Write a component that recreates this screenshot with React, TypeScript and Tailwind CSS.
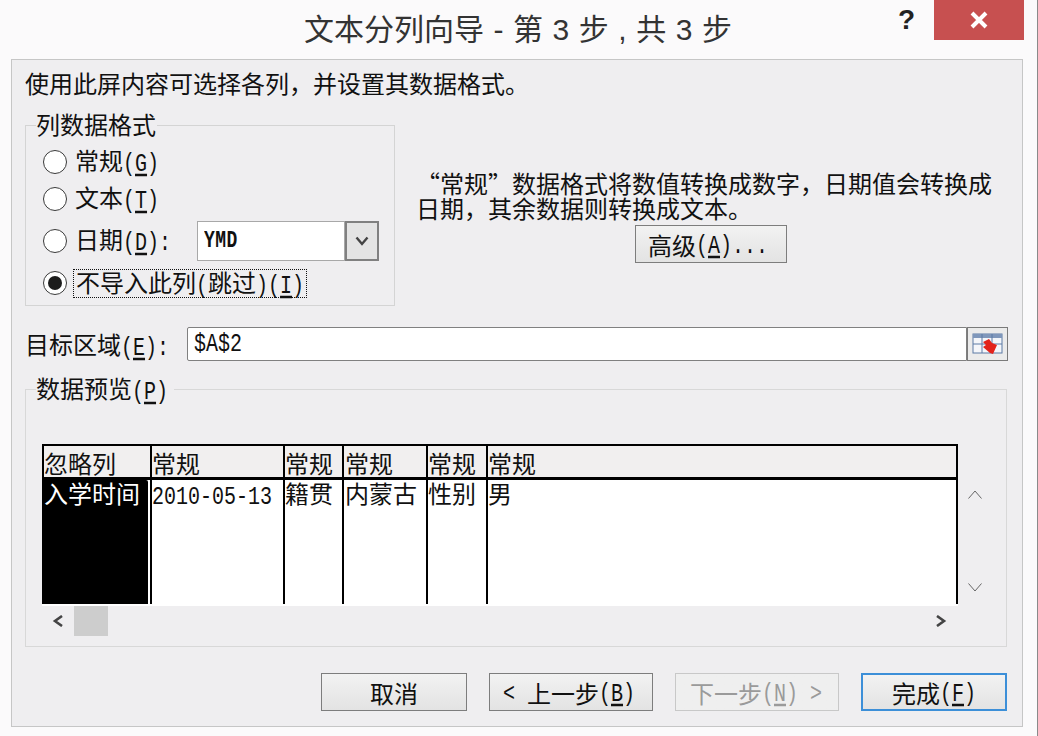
import React from "react";

const M = ({ children, className = "" }: { children: React.ReactNode; className?: string }) => (
  <span className={"inline-block scale-y-[1.25] whitespace-pre font-['Liberation_Mono',monospace] text-[20px] leading-[24px] " + className}>{children}</span>
);

const Acc = ({ k }: { k: string }) => (
  <M>
    (<span className="underline underline-offset-2">{k}</span>)
  </M>
);

const Radio = ({ on = false }: { on?: boolean }) => (
  <span className="w-[24px] h-[24px] rounded-full border-[1.5px] border-[#3a3a3a] bg-white flex items-center justify-center shrink-0">
    {on && <span className="w-[14px] h-[14px] rounded-full bg-[#1c1c1c]" />}
  </span>
);

const btn =
  "h-[38px] pt-[6px] flex items-center justify-center bg-gradient-to-b text-[24px] leading-[30px] ";
const normal = "border border-[#7d7d7d] from-[#f2f2f2] to-[#e3e3e3] text-[#111] ";

const columns = [
  { w: "w-[108px]", head: "忽略列", body: "入学时间", pad: "pl-0", black: true },
  { w: "w-[133px]", head: "常规", body: "2010-05-13", pad: "pl-0", mono: true },
  { w: "w-[59px]", head: "常规", body: "籍贯", pad: "pl-0" },
  { w: "w-[84px]", head: "常规", body: "内蒙古", pad: "pl-[1px]" },
  { w: "w-[60px]", head: "常规", body: "性别", pad: "pl-0" },
  { w: "w-[472px]", head: "常规", body: "男", pad: "pl-0", last: true },
];

export default function App() {
  return (
    <div className="w-[1038px] h-[736px] overflow-hidden bg-[#fbfafb] text-[#111] font-['Liberation_Sans','Noto_Sans_CJK_SC',sans-serif] flex flex-col border-r border-r-[#8a8a8a]">
      {/* Title bar */}
      <div className="h-[59px] flex items-start shrink-0">
        <div className="ml-[304px] mt-[11px] text-[30px] leading-[38px] text-[#333] whitespace-pre [word-spacing:1.2px]">
          文本分列向导 - 第 3 步 , 共 3 步
        </div>
        <div className="ml-auto flex items-start mr-[13px]">
          <span className="mr-[19px] mt-[4px] text-[28px] leading-[32px] font-bold text-[#222]">?</span>
          <div className="w-[90px] h-[40px] bg-[#c75050] flex items-center justify-center">
            <svg width="20" height="20" viewBox="0 0 20 20">
              <path d="M3 3 L17 17 M17 3 L3 17" stroke="#fff" strokeWidth="4" fill="none" />
            </svg>
          </div>
        </div>
      </div>

      {/* Main panel */}
      <div className="ml-[11px] w-[1012px] h-[668px] shrink-0 border border-[#c6c6c6] bg-[#efeef0] pl-[13px] pt-[13px] flex flex-col">
        <div className="text-[24px] leading-[24px] h-[24px] whitespace-nowrap">
          使用此屏内容可选择各列，并设置其数据格式。
        </div>

        {/* Format row */}
        <div className="flex mt-[28px] h-[181px]">
          <div className="relative w-[370px] h-[181px] border border-[#d4d4d4] pl-[17px] pt-[18px]">
            <span className="absolute -top-[13px] left-[10px] text-[24px] leading-[26px] bg-[#efeef0] pr-[1px] whitespace-nowrap">
              列数据格式
            </span>
            <div className="h-[36px] flex items-center gap-[8px]">
              <Radio />
              <span className="text-[24px] leading-[30px] whitespace-nowrap">
                常规<Acc k="G" />
              </span>
            </div>
            <div className="h-[36px] mt-[1px] flex items-center gap-[8px]">
              <Radio />
              <span className="text-[24px] leading-[30px] whitespace-nowrap">
                文本<Acc k="T" />
              </span>
            </div>
            <div className="h-[40px] mt-[4px] flex items-center">
              <Radio />
              <span className="ml-[8px] w-[122px] text-[24px] leading-[30px] whitespace-nowrap">
                日期<Acc k="D" />
                <M>:</M>
              </span>
              <div className="w-[182px] h-[40px] flex">
                <div className="w-[148px] h-[40px] bg-white border border-[#a8a8a8] pl-[6px] flex items-center">
                  <span className="inline-block scale-y-[1.3] font-['Liberation_Mono',monospace] font-bold text-[18px] tracking-[0.5px] text-[#111]">
                    YMD
                  </span>
                </div>
                <div className="w-[34px] h-[40px] border-2 border-[#808080] bg-[#e4e4e4] flex items-center justify-center">
                  <svg width="14" height="10" viewBox="0 0 14 10">
                    <path d="M1.5 1.5 L7 8 L12.5 1.5" stroke="#444" strokeWidth="2.4" fill="none" />
                  </svg>
                </div>
              </div>
            </div>
            <div className="h-[36px] mt-[4px] flex items-center">
              <Radio on />
              <span className="ml-[6px] w-[234px] h-[29px] border border-dotted border-[#111] pl-[2px] text-[24px] leading-[27px] whitespace-nowrap">
                不导入此列<M>(</M>跳过<M>)</M><Acc k="I" />
              </span>
            </div>
          </div>

          <div className="ml-[21px] pt-[45px]">
            <div className="w-[590px] text-[24px] leading-[25px] whitespace-nowrap font-['Noto_Sans_CJK_SC',sans-serif]">
              “常规”数据格式将数值转换成数字，日期值会转换成
              <br />
              日期，其余数据则转换成文本。
            </div>
            <div className={btn + normal + " w-[152px] ml-[219px] mt-[5px] pr-[6px] whitespace-nowrap"}>
              高级<Acc k="A" />
              <M>...</M>
            </div>
          </div>
        </div>

        {/* Destination row */}
        <div className="flex items-center mt-[21px] h-[34px]">
          <span className="w-[162px] pt-[3px] text-[24px] leading-[30px] whitespace-nowrap">
            目标区域<Acc k="E" />
            <M>:</M>
          </span>
          <div className="w-[780px] h-[34px] bg-white border border-[#808080] rounded-l-[2px] pl-[6px] pt-[2px] flex items-center">
            <M className="text-[#111]">$A$2</M>
          </div>
          <div className="w-[41px] h-[34px] border border-[#7a7a7a] bg-[#ebebeb] flex items-center justify-center">
            <svg width="31" height="24" viewBox="0 0 31 24">
              <rect x="1" y="2" width="29" height="19" fill="#f4f6fa" stroke="#5d7aa5" strokeWidth="1" />
              <rect x="1" y="2" width="29" height="4" fill="#7f97bb" />
              <path d="M1 12 H30 M10 2 V21 M20 2 V21" stroke="#5d7aa5" strokeWidth="1" fill="none" />
              <path d="M11 10 L17 7 L20 11 L25 13 L21 22 L18 21 L11 15 L14 13 Z" fill="#e3231b" />
            </svg>
          </div>
        </div>

        {/* Preview group */}
        <div className="relative mt-[28px] w-[982px] h-[258px] border border-[#d8d8d8] pl-[16px] pt-[54px]">
          <span className="absolute -top-[15px] left-[10px] text-[24px] leading-[30px] bg-[#efeef0] pr-[6px] whitespace-nowrap">
            数据预览<Acc k="P" />
          </span>
          <div className="flex">
            <div className="flex w-[916px] h-[160px] border-t-2 border-t-black">
              {columns.map((c, i) => (
                <div
                  key={i}
                  className={
                    c.w +
                    " flex flex-col border-l-2 border-l-black " +
                    (c.last ? "border-r-2 border-r-black" : "")
                  }
                >
                  <div
                    className={
                      "h-[34px] border-b-[3px] border-b-black bg-[#f1efef] overflow-hidden text-[24px] leading-[37px] whitespace-nowrap " +
                      c.pad
                    }
                  >
                    {c.head}
                  </div>
                  <div className="h-[124px] bg-white">
                    <div
                      className={
                        "h-full text-[24px] leading-[30px] whitespace-nowrap overflow-hidden " +
                        c.pad +
                        (c.black ? " bg-black text-white w-[104px] rounded-tr-[2px]" : "")
                      }
                    >
                      {c.mono ? <M>{c.body}</M> : c.body}
                    </div>
                  </div>
                </div>
              ))}
            </div>
            <div className="pl-[10px] pt-[46px] flex flex-col">
              <svg width="14" height="9" viewBox="0 0 14 9">
                <path d="M0.5 8.5 L7 1 L13.5 8.5" stroke="#666" strokeWidth="1" fill="none" />
              </svg>
              <svg className="mt-[84px]" width="14" height="9" viewBox="0 0 14 9">
                <path d="M0.5 0.5 L7 8 L13.5 0.5" stroke="#666" strokeWidth="1" fill="none" />
              </svg>
            </div>
          </div>
          <div className="w-[916px] h-[2px] bg-white" />
          <div className="w-[916px] h-[30px] flex items-center">
            <div className="w-[32px] pl-[10px]">
              <svg className="block" width="12" height="12" viewBox="0 0 12 12">
                <path d="M10 1 L3 6 L10 11" stroke="#444" strokeWidth="2.6" fill="none" />
              </svg>
            </div>
            <div className="w-[34px] h-[30px] bg-[#cdcdcd]" />
            <div className="ml-auto mr-[11px]">
              <svg className="block" width="12" height="12" viewBox="0 0 12 12">
                <path d="M2 1 L9 6 L2 11" stroke="#444" strokeWidth="2.6" fill="none" />
              </svg>
            </div>
          </div>
        </div>

        {/* Wizard buttons */}
        <div className="flex mt-[26px] pl-[296px] gap-[22px]">
          <div className={btn + normal + " w-[146px]"}>取消</div>
          <div className={btn + normal + " w-[164px] pr-[4px] whitespace-pre"}>
            <M>{"< "}</M>上一步<Acc k="B" />
          </div>
          <div className={btn + " w-[164px] pr-[2px] whitespace-pre border border-[#c8c8c8] from-[#efefef] to-[#efefef] text-[#9a9a9a]"}>
            下一步<Acc k="N" />
            <M>{" >"}</M>
          </div>
          <div className={btn + " w-[146px] whitespace-pre border-2 border-[#3c8fd8] from-[#f2f2f2] to-[#e3e3e3] text-[#111]"}>
            完成<Acc k="F" />
          </div>
        </div>
      </div>
    </div>
  );
}
